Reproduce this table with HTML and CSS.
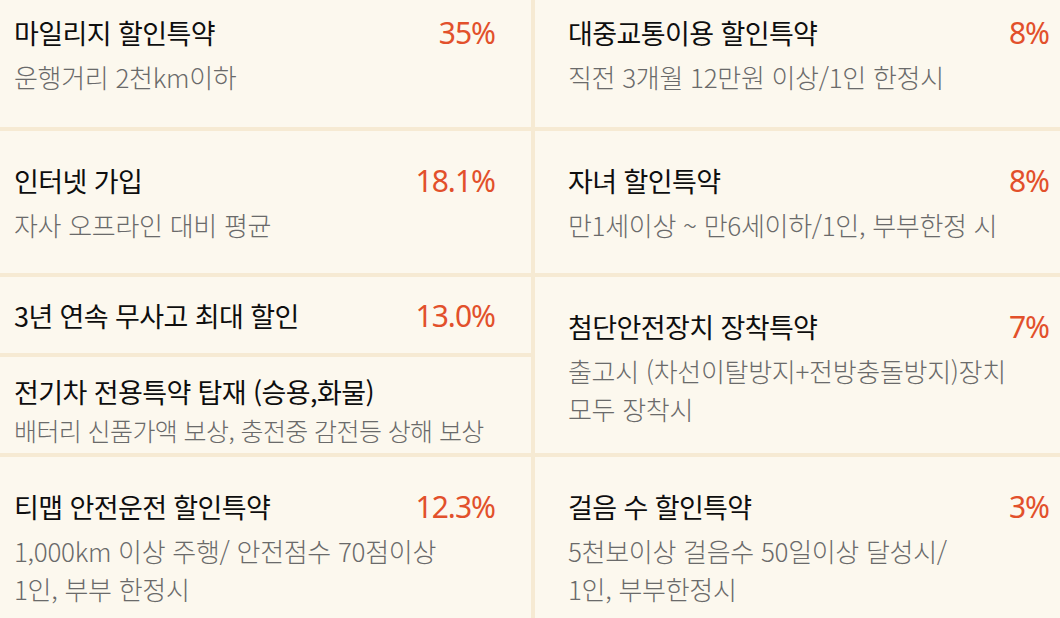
FILE: index.html
```html
<!DOCTYPE html>
<html lang="ko">
<head>
<meta charset="utf-8">
<title>할인특약</title>
<link rel="stylesheet" href="styles.css">
</head>
<body>
<div class="board">
  <div class="cell c-l1">
    <div class="head"><span class="title">마일리지 할인특약</span><span class="rate">35%</span></div>
    <p class="sub">운행거리 2천km이하</p>
  </div>
  <div class="cell c-r1">
    <div class="head"><span class="title">대중교통이용 할인특약</span><span class="rate">8%</span></div>
    <p class="sub">직전 3개월 12만원 이상/1인 한정시</p>
  </div>
  <div class="cell c-l2">
    <div class="head"><span class="title">인터넷 가입</span><span class="rate">18.1%</span></div>
    <p class="sub">자사 오프라인 대비 평균</p>
  </div>
  <div class="cell c-r2">
    <div class="head"><span class="title">자녀 할인특약</span><span class="rate">8%</span></div>
    <p class="sub">만1세이상 ~ 만6세이하/1인, 부부한정 시</p>
  </div>
  <div class="cell c-l3 cell-tight">
    <div class="head"><span class="title">3년 연속 무사고 최대 할인</span><span class="rate">13.0%</span></div>
  </div>
  <div class="cell c-r3">
    <div class="head"><span class="title">첨단안전장치 장착특약</span><span class="rate">7%</span></div>
    <p class="sub">출고시 (차선이탈방지+전방충돌방지)장치<br>모두 장착시</p>
  </div>
  <div class="cell c-l4 cell-compact">
    <div class="head"><span class="title">전기차 전용특약 탑재 (승용,화물)</span></div>
    <p class="sub">배터리 신품가액 보상, 충전중 감전등 상해 보상</p>
  </div>
  <div class="cell c-l5">
    <div class="head"><span class="title">티맵 안전운전 할인특약</span><span class="rate">12.3%</span></div>
    <p class="sub">1,000km 이상 주행/ 안전점수 70점이상<br>1인, 부부 한정시</p>
  </div>
  <div class="cell c-r5">
    <div class="head"><span class="title">걸음 수 할인특약</span><span class="rate">3%</span></div>
    <p class="sub">5천보이상 걸음수 50일이상 달성시/<br>1인, 부부한정시</p>
  </div>
</div>
</body>
</html>
```

FILE: styles.css
```css
* { box-sizing: border-box; }

html, body {
  margin: 0;
  padding: 0;
  background: #fcf8ee;
  overflow: hidden;
}

body {
  font-family: "Noto Sans CJK KR", "Noto Sans", sans-serif;
}

.board {
  display: grid;
  grid-template-columns: 550px 550px;
  grid-template-rows: 144px 142px 76px 96px 180px;
  gap: 4px;
  width: 1104px;
  margin: -17px 0 0 -19px;
  background: #f6ead3;
}

.cell {
  background: #fcf8ee;
  padding: 29px 36px 0 33px;
}

.c-l1 { grid-column: 1; grid-row: 1; }
.c-r1 { grid-column: 2; grid-row: 1; }
.c-l2 { grid-column: 1; grid-row: 2; }
.c-r2 { grid-column: 2; grid-row: 2; }
.c-l3 { grid-column: 1; grid-row: 3; }
.c-r3 { grid-column: 2; grid-row: 3 / span 2; }
.c-l4 { grid-column: 1; grid-row: 4; }
.c-l5 { grid-column: 1; grid-row: 5; }
.c-r5 { grid-column: 2; grid-row: 5; }

.cell-tight { padding-top: 18px; }
.cell-compact { padding-top: 14px; }
.cell-compact .sub {
  margin-top: 1px;
  font-size: 25px;
  letter-spacing: -0.6px;
}

.head {
  display: flex;
  justify-content: space-between;
  align-items: center;
  height: 40px;
}

.title {
  font-size: 27px;
  font-weight: 400;
  color: #0e0e0e;
  letter-spacing: -0.6px;
  white-space: nowrap;
}

.rate {
  font-family: "Noto Sans", sans-serif;
  font-size: 30px;
  font-weight: 400;
  color: #e2502b;
  letter-spacing: -1px;
}

.sub {
  margin: 6px 0 0;
  font-size: 26px;
  font-weight: 300;
  line-height: 37.5px;
  color: #6a6a6a;
  letter-spacing: -0.3px;
  white-space: nowrap;
}
```
